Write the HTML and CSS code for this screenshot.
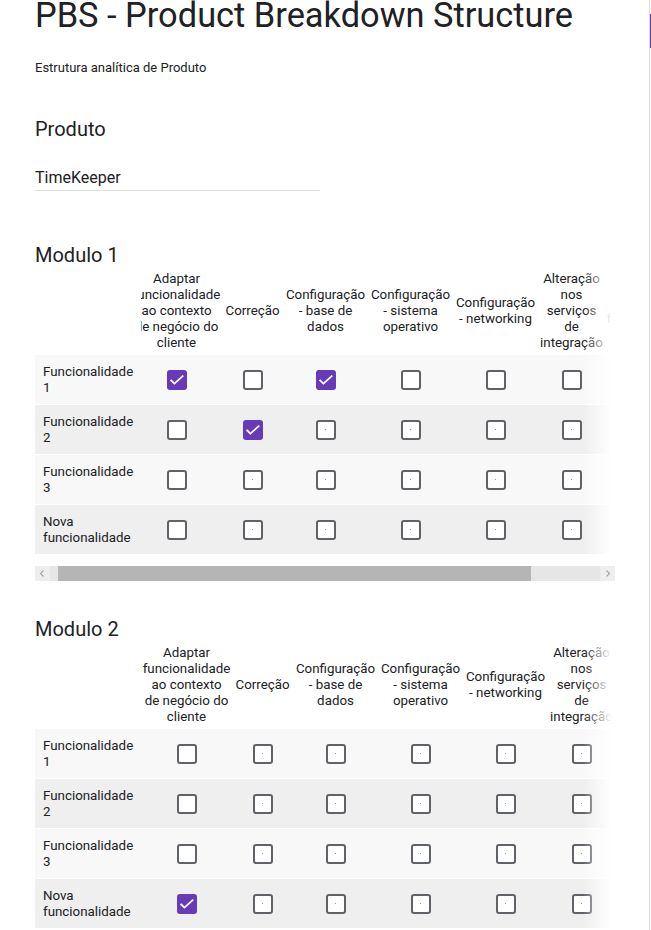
FILE: index.html
```html
<!DOCTYPE html>
<html lang="pt">
<head>
<meta charset="utf-8">
<title>PBS - Product Breakdown Structure</title>
<link rel="stylesheet" href="styles.css">
</head>
<body>
<div class="page">
  <main class="card">
    <h1 class="title">PBS - Product Breakdown Structure</h1>
    <p class="desc">Estrutura analítica de Produto</p>

    <section class="question">
      <h2 class="q-title">Produto</h2>
      <div class="answer">TimeKeeper</div>
    </section>

    <section class="question grid-q scrolled">
      <h2 class="q-title mod">Modulo 1</h2>
      <div class="grid-view">
        <div class="row head">
          <div class="label"></div>
          <div class="cells">
            <div class="col-h">Adaptar<br>funcionalidade<br>ao contexto<br>de negócio do<br>cliente</div>
            <div class="col-h">Correção</div>
            <div class="col-h">Configuração<br>- base de<br>dados</div>
            <div class="col-h">Configuração<br>- sistema<br>operativo</div>
            <div class="col-h">Configuração<br>- networking</div>
            <div class="col-h">Alteração<br>nos<br>serviços<br>de<br>integração</div>
            <div class="col-h">Nova<br>funcionalidade</div>
          </div>
        </div>
        <div class="row odd">
          <div class="label">Funcionalidade 1</div>
          <div class="cells">
            <div class="cell"><span class="cb on"><svg viewBox="0 0 16 16"><path d="M2.2 8.4 5.4 11.6 13.6 4.3"/></svg></span></div>
            <div class="cell"><span class="cb"></span></div>
            <div class="cell"><span class="cb on"><svg viewBox="0 0 16 16"><path d="M2.2 8.4 5.4 11.6 13.6 4.3"/></svg></span></div>
            <div class="cell"><span class="cb"></span></div>
            <div class="cell"><span class="cb"></span></div>
            <div class="cell"><span class="cb"></span></div>
            <div class="cell"><span class="cb"></span></div>
          </div>
        </div>
        <div class="row even">
          <div class="label">Funcionalidade 2</div>
          <div class="cells">
            <div class="cell"><span class="cb"></span></div>
            <div class="cell"><span class="cb on"><svg viewBox="0 0 16 16"><path d="M2.2 8.4 5.4 11.6 13.6 4.3"/></svg></span></div>
            <div class="cell"><span class="cb dot"></span></div>
            <div class="cell"><span class="cb dot"></span></div>
            <div class="cell"><span class="cb dot"></span></div>
            <div class="cell"><span class="cb dot"></span></div>
            <div class="cell"><span class="cb dot"></span></div>
          </div>
        </div>
        <div class="row odd">
          <div class="label">Funcionalidade 3</div>
          <div class="cells">
            <div class="cell"><span class="cb"></span></div>
            <div class="cell"><span class="cb dot"></span></div>
            <div class="cell"><span class="cb dot"></span></div>
            <div class="cell"><span class="cb dot"></span></div>
            <div class="cell"><span class="cb dot"></span></div>
            <div class="cell"><span class="cb dot"></span></div>
            <div class="cell"><span class="cb dot"></span></div>
          </div>
        </div>
        <div class="row even">
          <div class="label">Nova funcionalidade</div>
          <div class="cells">
            <div class="cell"><span class="cb"></span></div>
            <div class="cell"><span class="cb dot"></span></div>
            <div class="cell"><span class="cb dot"></span></div>
            <div class="cell"><span class="cb dot"></span></div>
            <div class="cell"><span class="cb dot"></span></div>
            <div class="cell"><span class="cb dot"></span></div>
            <div class="cell"><span class="cb dot"></span></div>
          </div>
        </div>
      </div>
      <div class="hbar">
        <div class="hbtn"><svg viewBox="0 0 15 15"><path d="M8.5 4.5 5.5 7.5 8.5 10.5"/></svg></div>
        <div class="htrack"><div class="hthumb"></div></div>
        <div class="hbtn"><svg viewBox="0 0 15 15"><path d="M6.5 4.5 9.5 7.5 6.5 10.5"/></svg></div>
      </div>
    </section>

    <section class="question grid-q">
      <h2 class="q-title mod mod2">Modulo 2</h2>
      <div class="grid-view">
        <div class="row head">
          <div class="label"></div>
          <div class="cells">
            <div class="col-h">Adaptar<br>funcionalidade<br>ao contexto<br>de negócio do<br>cliente</div>
            <div class="col-h">Correção</div>
            <div class="col-h">Configuração<br>- base de<br>dados</div>
            <div class="col-h">Configuração<br>- sistema<br>operativo</div>
            <div class="col-h">Configuração<br>- networking</div>
            <div class="col-h">Alteração<br>nos<br>serviços<br>de<br>integração</div>
            <div class="col-h">Nova<br>funcionalidade</div>
          </div>
        </div>
        <div class="row odd">
          <div class="label">Funcionalidade 1</div>
          <div class="cells">
            <div class="cell"><span class="cb"></span></div>
            <div class="cell"><span class="cb dot"></span></div>
            <div class="cell"><span class="cb dot"></span></div>
            <div class="cell"><span class="cb dot"></span></div>
            <div class="cell"><span class="cb dot"></span></div>
            <div class="cell"><span class="cb dot"></span></div>
            <div class="cell"><span class="cb dot"></span></div>
          </div>
        </div>
        <div class="row even">
          <div class="label">Funcionalidade 2</div>
          <div class="cells">
            <div class="cell"><span class="cb"></span></div>
            <div class="cell"><span class="cb dot"></span></div>
            <div class="cell"><span class="cb dot"></span></div>
            <div class="cell"><span class="cb dot"></span></div>
            <div class="cell"><span class="cb dot"></span></div>
            <div class="cell"><span class="cb dot"></span></div>
            <div class="cell"><span class="cb dot"></span></div>
          </div>
        </div>
        <div class="row odd">
          <div class="label">Funcionalidade 3</div>
          <div class="cells">
            <div class="cell"><span class="cb"></span></div>
            <div class="cell"><span class="cb dot"></span></div>
            <div class="cell"><span class="cb dot"></span></div>
            <div class="cell"><span class="cb dot"></span></div>
            <div class="cell"><span class="cb dot"></span></div>
            <div class="cell"><span class="cb dot"></span></div>
            <div class="cell"><span class="cb dot"></span></div>
          </div>
        </div>
        <div class="row even">
          <div class="label">Nova funcionalidade</div>
          <div class="cells">
            <div class="cell"><span class="cb on"><svg viewBox="0 0 16 16"><path d="M2.2 8.4 5.4 11.6 13.6 4.3"/></svg></span></div>
            <div class="cell"><span class="cb dot"></span></div>
            <div class="cell"><span class="cb dot"></span></div>
            <div class="cell"><span class="cb dot"></span></div>
            <div class="cell"><span class="cb dot"></span></div>
            <div class="cell"><span class="cb dot"></span></div>
            <div class="cell"><span class="cb dot"></span></div>
          </div>
        </div>
      </div>
    </section>
  </main>
  <div class="edge"><div class="edge-accent"></div></div>
</div>
</body>
</html>
```
FILE: styles.css
```css
* { box-sizing: border-box; }
html, body { margin: 0; padding: 0; background: #fff; }
body {
  font-family: Roboto, "Noto Sans", Arial, sans-serif;
  color: #202124;
  overflow: hidden;
}
.page { display: flex; height: 930px; overflow: hidden; }
.card {
  width: 649px;
  flex: none;
  padding: 0 0 0 35px;
}
.edge {
  flex: 0 0 2px;
  border-left: 1px solid #dcd8e4;
  padding-top: 14px;
}
.edge-accent { height: 34px; background: #673ab7; }
.title {
  font-size: 34.4px;
  font-weight: 400;
  line-height: 40px;
  margin: -5px 0 0;
  white-space: nowrap;
}
.desc {
  font-size: 13px;
  line-height: 20px;
  margin: 23px 0 0;
}
.question { margin: 0; }
.q-title {
  font-size: 20px;
  font-weight: 400;
  line-height: 24px;
  margin: 39px 0 0;
}
.q-title.mod { margin-top: 52px; }
.q-title.mod2 { margin-top: 36px; }
.answer {
  width: 285px;
  font-size: 16px;
  line-height: 24px;
  margin-top: 25px;
  border-bottom: 1px solid #e0e0e0;
}

/* grid question */
.grid-view {
  position: relative;
  width: 580px;
  overflow: hidden;
  --scroll: 0px;
}
.scrolled .grid-view { --scroll: -10px; }
.grid-view::after {
  content: "";
  position: absolute;
  top: 0; right: 0; bottom: 0;
  width: 32px;
  background: linear-gradient(to right, rgba(255,255,255,0), #fff 90%);
  pointer-events: none;
}
.row {
  display: flex;
  width: 580px;
  font-size: 13.33px;
  line-height: 16px;
}
.row.head { height: 88px; align-items: center; background: #fff; }
.row.odd, .row.even { height: 49px; margin-top: 1px; align-items: center; }
.row.head + .row { margin-top: 0; }
.row.odd { background: #f8f8f8; }
.row.even { background: #efefef; }
.label {
  flex: 0 0 106px;
  align-self: stretch;
  display: flex;
  align-items: center;
  padding: 0 8px;
  background: inherit;
  position: relative;
  z-index: 1;
}
.cells {
  flex: none;
  display: grid;
  grid-template-columns: 91px 61px 85px 85px 85px 67px 91px;
  margin-left: var(--scroll);
  align-items: center;
}
.col-h { text-align: center; white-space: nowrap; }
.cell { display: flex; justify-content: center; align-items: center; }
.cb {
  position: relative;
  width: 20px;
  height: 20px;
  border: 2px solid #5f6368;
  border-radius: 3px;
  background: #fff;
  display: flex;
  align-items: center;
  justify-content: center;
}
.cb.on { background: #673ab7; border-color: #673ab7; }
.cb svg { width: 16px; height: 16px; display: block; }
.cb path { fill: none; stroke: #fff; stroke-width: 1.8; stroke-linecap: square; }
.cb.dot::after {
  content: "";
  width: 1px;
  height: 1px;
  background: #9a9a9a;
}

/* scrollbar */
.hbar {
  display: flex;
  width: 580px;
  height: 15px;
  margin-top: 12px;
  background: #eeeeee;
}
.hbtn { flex: 0 0 15px; }
.hbtn svg { width: 15px; height: 15px; display: block; }
.hbtn path { fill: none; stroke: #a3a3a3; stroke-width: 1.1; }
.htrack { flex: 1; display: flex; background: #e6e6e6; }
.hthumb { width: 473px; margin-left: 8px; background: #b5b5b5; }
```
